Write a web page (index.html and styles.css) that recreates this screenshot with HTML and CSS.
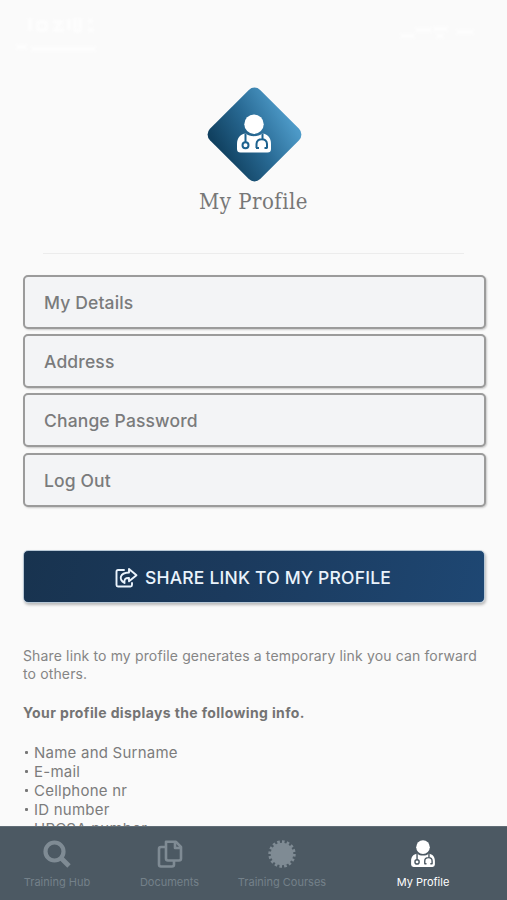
FILE: index.html
```html
<!DOCTYPE html>
<html lang="en">
<head>
<meta charset="utf-8">
<title>My Profile</title>
<link rel="stylesheet" href="styles.css">
</head>
<body>
<svg width="0" height="0" class="defs" aria-hidden="true">
  <symbol id="doctor" viewBox="0 0 36 40">
    <path d="M10 19.500 C13 23 23 23 26 19.500 C32 20 35 24 35 30 V35 Q35 38.500 31.500 38.500 H4.500 Q1 38.500 1 35 V30 C1 24 4 20 10 19.500Z" fill="#fff"/>
    <circle cx="18" cy="10.200" r="9.700" fill="#fff"/>
    <g fill="none" stroke="currentColor" stroke-width="2">
      <path d="M9.500 19.500V29M26.500 19.500V25M20.500 34V30C20.500 23.500 31 23.500 31 30V34"/>
      <circle cx="9.500" cy="31.300" r="3"/>
      <path d="M20 34H23M28.500 34H31.500"/>
    </g>
  </symbol>
</svg>
<div class="screen">
  <svg class="status" viewBox="0 0 507 60" fill="none" stroke="#fff">
    <path stroke-width="3" d="M30 18v13M38 22h8v8h-8zM53 22h8l-6 8h9M69 19v11M75 18v13h5V18M88 21h5M88 30h6"/>
    <path stroke-width="4" d="M17 47h9M32 49h63"/>
    <path stroke-width="4" d="M401 36h13M416 30h15M434 29h13M437 36h6M457 32h16"/>
  </svg>
  <header class="head">
    <div class="logo"><div class="diamond"></div><svg class="logo-icon"><use href="#doctor"/></svg></div>
    <h1>My Profile</h1>
  </header>
  <main>
    <nav class="menu">
      <a>My Details</a>
      <a>Address</a>
      <a>Change Password</a>
      <a>Log Out</a>
    </nav>
    <button class="share">
      <svg viewBox="0 0 23 20" fill="none" stroke="currentColor" stroke-width="1.900" stroke-linejoin="round" stroke-linecap="round">
        <path d="M9 2H3Q1.500 2 1.500 3.500V17Q1.500 18.500 3 18.500H15.500Q17 18.500 17 17V15"/>
        <path d="M14 1L21.500 7.200L14 13.300V10C10.500 9.800 9 11 9.500 15C3.500 11.500 4.500 4.800 14 4.500Z"/>
      </svg>
      <span>SHARE LINK TO MY PROFILE</span>
    </button>
    <p class="note">Share link to my profile generates a temporary link you can forward to others.</p>
    <p class="lead">Your profile displays the following info.</p>
    <ul>
      <li>Name and Surname</li>
      <li>E-mail</li>
      <li>Cellphone nr</li>
      <li>ID number</li>
      <li>HPCSA number</li>
    </ul>
  </main>
  <footer class="tabs">
    <a class="tab">
      <svg viewBox="0 0 28 28" fill="none" stroke="currentColor"><circle cx="11.500" cy="11.500" r="9" stroke-width="4.200"/><path d="M18 18L26 26" stroke-width="4.800"/></svg>
      <span>Training Hub</span>
    </a>
    <a class="tab">
      <svg viewBox="0 0 28 28" fill="none" stroke="currentColor" stroke-width="2.600" stroke-linejoin="round"><path d="M10 1.800H20L25 7V18.500Q25 20.500 23 20.500H12Q10 20.500 10 18.500Z"/><path d="M10 7H5Q3 7 3 9V24.500Q3 26.500 5 26.500H16Q18 26.500 18 24.500V20.500M19 2V8H25"/></svg>
      <span>Documents</span>
    </a>
    <a class="tab">
      <svg viewBox="-14 -14 28 28"><circle r="11.300" fill="currentColor"/><circle r="12.200" fill="none" stroke="currentColor" stroke-width="3" pathLength="64" stroke-dasharray="2.200 1.800"/></svg>
      <span>Training Courses</span>
    </a>
    <a class="tab active">
      <svg><use href="#doctor"/></svg>
      <span>My Profile</span>
    </a>
  </footer>
</div>
</body>
</html>
```

FILE: styles.css
```css
* { box-sizing: border-box; }
body { margin: 0; background: #fafafa; font-family: Inter, "Liberation Sans", sans-serif; color: #7a7b7c; }
.defs { position: absolute; }
.screen { height: 900px; display: flex; flex-direction: column; overflow: hidden; }
.status { display: block; width: 507px; height: 60px; flex: none; filter: blur(1px); opacity: .7; }
.head { flex: none; height: 194px; margin: 0 43px; border-bottom: 1px solid #ececec; padding-top: 27.500px; display: flex; flex-direction: column; align-items: center; }
.logo { width: 94px; height: 94px; display: grid; place-items: center; margin-left: 1px; }
.logo > * { grid-area: 1 / 1; }
.diamond { width: 71px; height: 71px; border-radius: 8px; transform: rotate(45deg); background: linear-gradient(15deg, #10405f 5%, #286993 50%, #4d9ac8 95%); }
.logo-icon { width: 36px; height: 40px; z-index: 1; margin-top: -2px; color: #1d628f; }
h1 { margin: 6.500px 0 0; font: 400 22px/28px "DejaVu Serif Condensed", "DejaVu Serif", serif; font-stretch: condensed; letter-spacing: .5px; color: #777; white-space: nowrap; }
main { flex: 1; min-height: 0; overflow: hidden; padding: 20.500px 21px 0 23px; }
.menu { display: grid; gap: 5.400px; width: 463px; margin-left: -.5px; }
.menu a { height: 54px; display: flex; align-items: center; padding: 1px 0 0 19.500px; border: 2px solid #9b9b9b; border-radius: 5px; background: #f3f4f6; box-shadow: 1px 1px 2px #0003; font-size: 17.500px; font-weight: 500; letter-spacing: .14px; }
.share { display: flex; align-items: center; justify-content: center; gap: 7px; width: 462px; height: 53px; margin: 43.500px 0 0; padding: 2px 2px 0 0; border: 1px solid #b8c8d6; border-radius: 5px; background: linear-gradient(105deg, #18334f, #1b3a5d 45%, #1e4773); box-shadow: 1px 2px 3px #0004; color: #eaf3fc; font: 500 17.500px/24px Inter, sans-serif; letter-spacing: .2px; }
.share svg { width: 23px; height: 20px; }
p { margin: 0; }
.note { margin-top: 43.500px; font-size: 14px; line-height: 18px; letter-spacing: .14px; color: #858585; }
.lead { margin-top: 21px; font-size: 14px; line-height: 18px; font-weight: 700; letter-spacing: .38px; color: #747474; }
ul { list-style: none; margin: 21px 0 0; padding: 0; font-size: 15px; line-height: 19px; letter-spacing: .23px; color: #7c7c7c; }
li { display: flex; align-items: center; gap: 6px; padding-left: 2px; white-space: nowrap; }
li::before { content: ""; width: 3px; height: 3px; border-radius: 1px; background: #777; }
.tabs { flex: none; height: 74px; display: grid; grid-template-columns: 114px 111px 114px 168px; background: #4c5963; border-top: 1px solid #616d76; color: #7f8b94; }
.tab { display: flex; flex-direction: column; align-items: center; padding-top: 13px; font-size: 11px; line-height: 15px; }
.tab svg { width: 28px; height: 28px; margin-bottom: 7px; }
.tab span { color: #74818a; white-space: nowrap; }
.tab.active { color: #4c5963; }
.tab.active span { color: #fff; }
```
